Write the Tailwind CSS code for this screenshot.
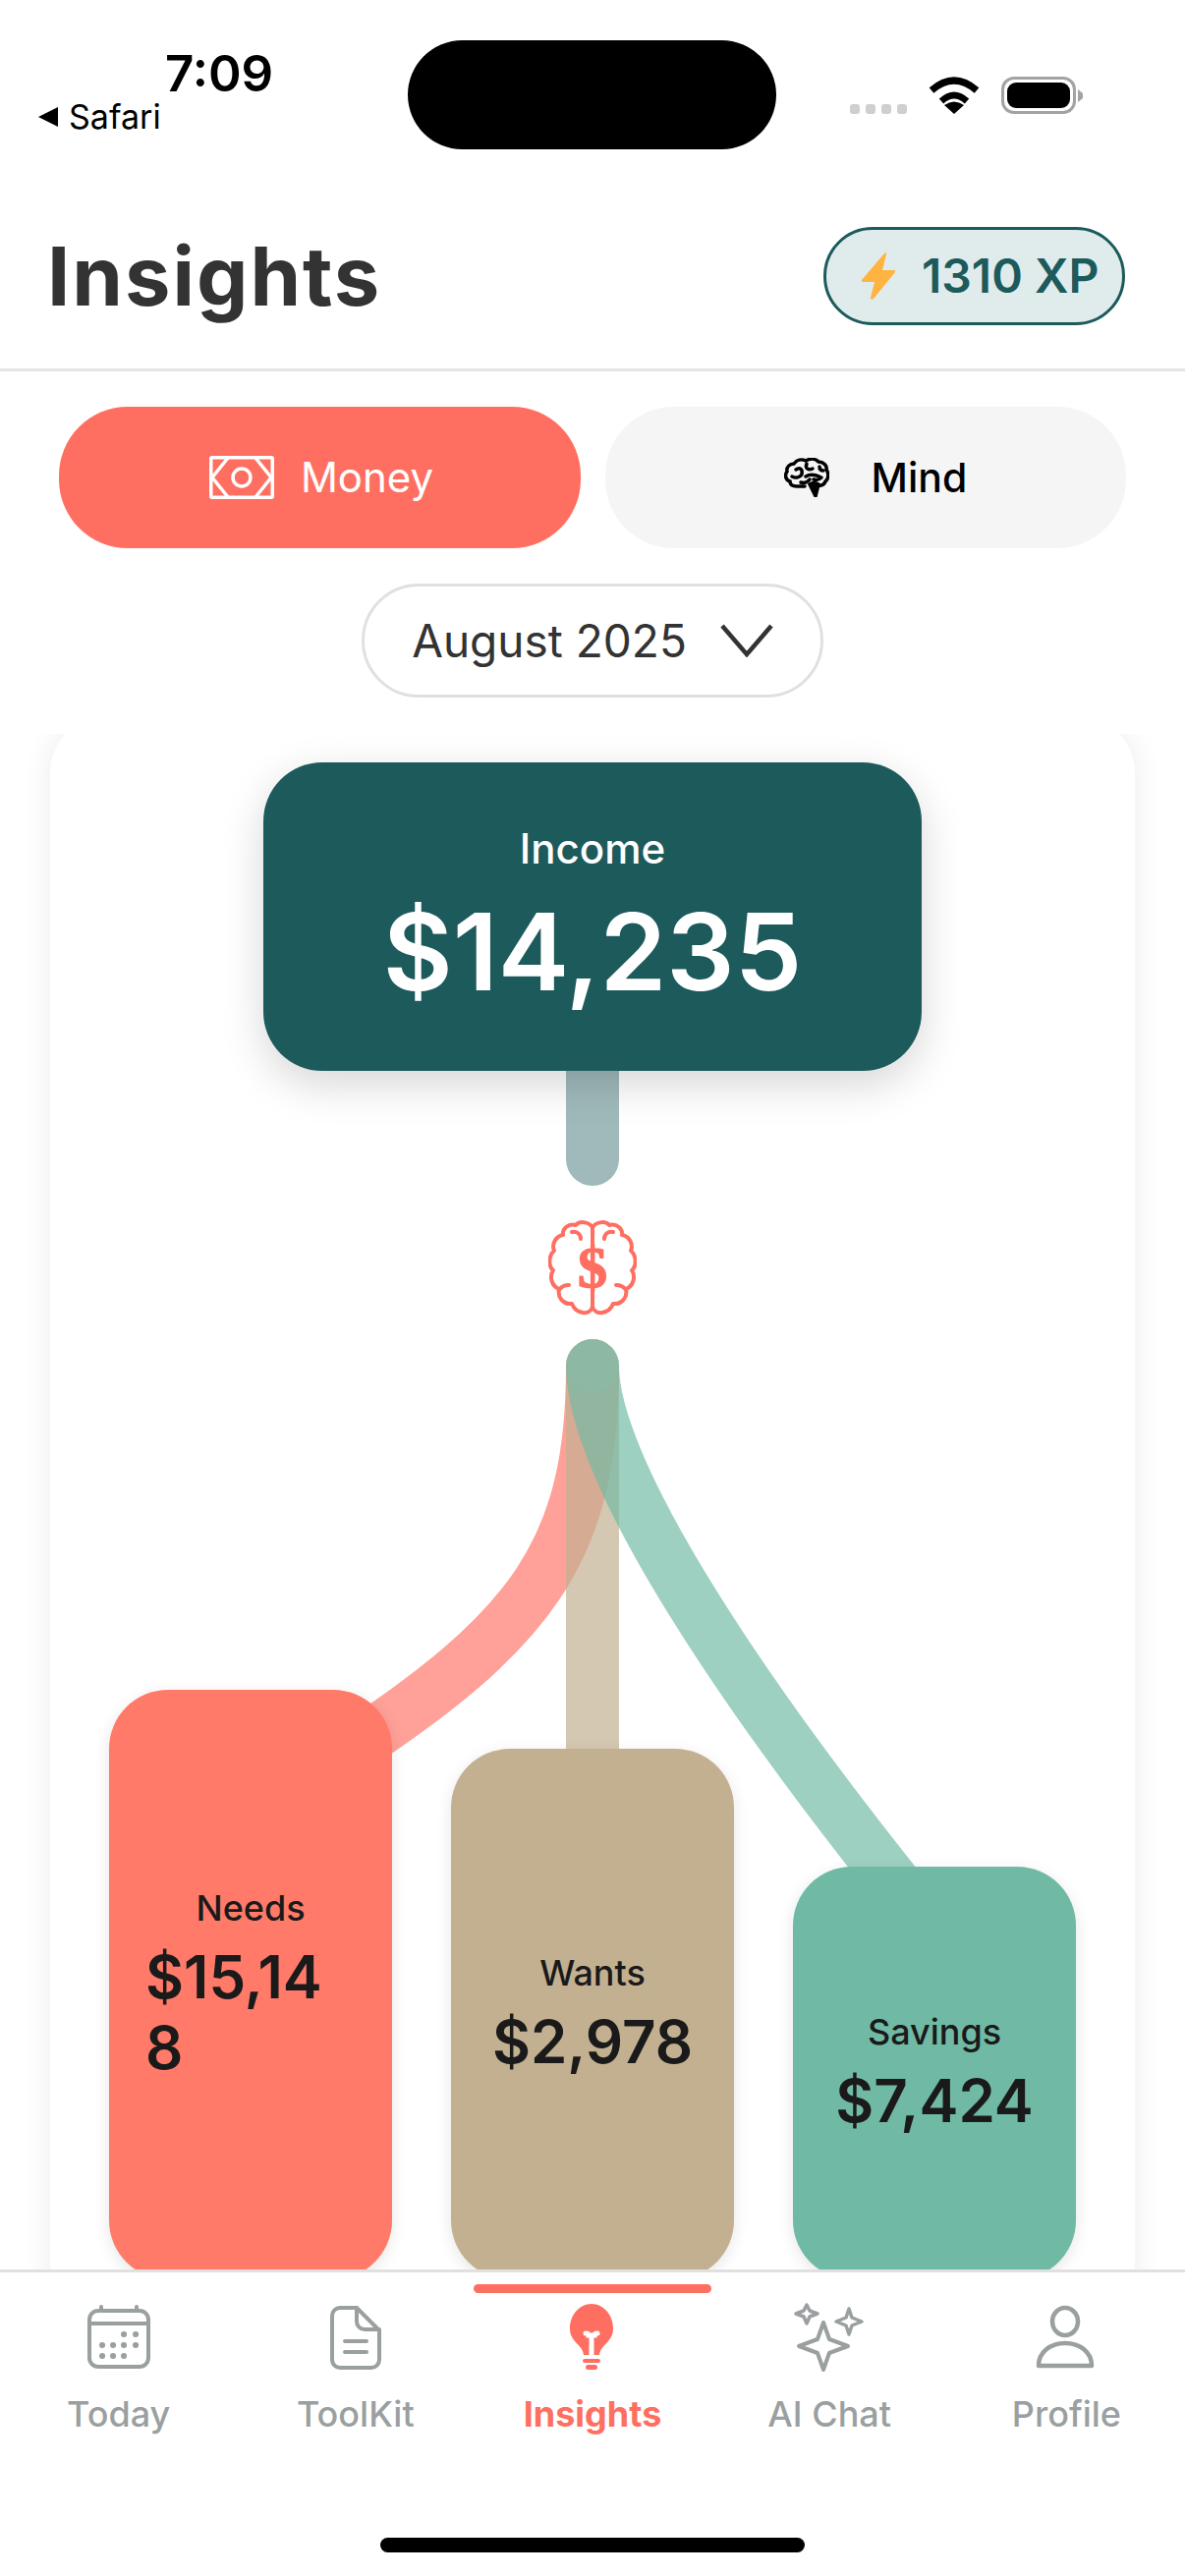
<!doctype html>
<html lang="en">
<head>
  <meta charset="UTF-8">
  <meta name="viewport" content="width=device-width, initial-scale=1.0">
  <script src="https://cdn.jsdelivr.net/npm/@tailwindcss/browser@4"></script>
  <title>Insights</title>
</head>
<body class="bg-white">
<div class="w-[1206px] h-[2622px] flex flex-col overflow-hidden bg-white font-['Inter',sans-serif]">

  <!-- status bar -->
  <div class="h-[230px] shrink-0 relative">
    <span class="absolute left-[168px] top-[45px] text-[51px] leading-[60px] font-semibold text-black">7:09</span>
    <div class="absolute left-[38px] top-[99px] flex items-center gap-[10px]">
      <svg width="22" height="22" viewBox="0 0 22 22"><path d="M21 1v20L1 11z" fill="#000"></path></svg>
      <span class="text-[34px] leading-[40px] text-black">Safari</span>
    </div>
    <div class="absolute left-[415px] top-[41px] w-[375px] h-[111px] bg-black rounded-[56px]"></div>
    <div class="absolute left-[865px] top-[106px] flex gap-[6px]">
      <div class="w-[10px] h-[10px] rounded-[3px] bg-[#cfcfcf]"></div>
      <div class="w-[10px] h-[10px] rounded-[3px] bg-[#cfcfcf]"></div>
      <div class="w-[10px] h-[10px] rounded-[3px] bg-[#cfcfcf]"></div>
      <div class="w-[10px] h-[10px] rounded-[3px] bg-[#cfcfcf]"></div>
    </div>
    <svg class="absolute left-[945px] top-[78px]" width="52" height="38" viewBox="0 0 52 38" fill="none" stroke="#000">
      <path d="M3 14Q26-6 49 14" stroke-width="7"></path>
      <path d="M13 25Q26 13 39 25" stroke-width="6.5"></path>
      <path d="M26 38L16 29Q26 22 36 29z" fill="#000" stroke="none"></path>
    </svg>
    <div class="absolute left-[1019px] top-[78px] flex items-center">
      <div class="w-[76px] h-[38px] rounded-[13px] border-[3px] border-[#a3a3a3] p-[3px]">
        <div class="w-full h-full rounded-[9px] bg-black"></div>
      </div>
      <svg class="ml-[2px]" width="5" height="13" viewBox="0 0 5 13"><path d="M0 0l5 4v5l-5 4z" fill="#a3a3a3"></path></svg>
    </div>
  </div>

  <!-- header -->
  <div class="h-[148px] shrink-0 border-b-[3px] border-[#e5e5e5] flex items-center justify-between pl-[48px] pr-[61px] pb-[44px]">
    <h1 class="text-[83px] leading-[90px] font-bold tracking-[2px] text-[#333333]">Insights</h1>
    <div class="w-[307px] h-[100px] rounded-full border-[3px] border-[#1d5a5c] bg-[#e0ecec] flex items-center pl-[34px] gap-[25px]">
      <svg width="38" height="48" viewBox="0 0 38 48"><path d="M25 1L2 28a1.500 1.500 0 0 0 1 2h12l-4 16c0 2 2 2 3 1l22-27a1.500 1.500 0 0 0-1-2H23l4-16c0-2-1-2-2-1z" fill="#ffb340"></path></svg>
      <span class="text-[48px] leading-[54px] font-semibold text-[#1d5a5c]">1310 XP</span>
    </div>
  </div>

  <!-- money / mind switch -->
  <div class="shrink-0 flex gap-[25px] px-[60px] pt-[36px]">
    <div class="w-[531px] h-[144px] rounded-[70px] bg-[#ff6f61] flex items-center justify-center gap-[27px] pl-[3px] text-white">
      <svg width="66" height="44" viewBox="0 0 66 44" fill="none" stroke="#fff" stroke-width="3.500">
        <rect x="1.750" y="1.750" width="62.500" height="40.500" rx="1"></rect>
        <circle cx="33" cy="22" r="9"></circle>
        <path d="M19 2L3 22l16 20M47 2l16 20-16 20"></path>
      </svg>
      <span class="text-[42px] leading-[50px]">Money</span>
    </div>
    <div class="w-[530px] h-[144px] rounded-[70px] bg-[#f5f5f5] flex items-center justify-center gap-[43px] pl-[20px] text-black">
      <svg width="46" height="40" viewBox="0 0 46 40" fill="none" stroke="#000" stroke-width="3.500" stroke-linecap="round">
        <path d="M21 29H13C8 29 6 27 6 24C2 23 0 18 3 14C2 9 6 6 10 6C13 2 18 1 22 3C27 0 32 1 35 4C40 4 44 8 43 12C46 16 45 22 42 24C41 28 36 29 33 28" fill="#f5f5f5"></path>
        <path d="M26 27l6 12 3-12c-3-2-6-2-9 0z" fill="#000"></path>
        <path d="M12 12c4-3 7 0 6 4M23 6c-2 5 2 7 6 5M8 19c4 2 8 1 10-2M22 19c5-3 9-2 14 0M36 9c0 3 2 4 4 4M17 25c3 1 7 0 9-3M30 22c3 1 6 0 8-2"></path>
      </svg>
      <span class="text-[41px] leading-[50px] font-medium">Mind</span>
    </div>
  </div>

  <!-- month picker -->
  <div class="shrink-0 flex justify-center pt-[36px] pb-[37px]">
    <div class="w-[470px] h-[116px] rounded-full border-[3px] border-[#e0e0e0] flex items-center justify-center gap-[34px] text-[#333333]">
      <span class="text-[46px] leading-[54px]">August 2025</span>
      <svg width="54" height="34" viewBox="0 0 54 34" fill="none" stroke="#333333" stroke-width="4.500"><path d="M2 2l25 29L52 2"></path></svg>
    </div>
  </div>

  <!-- scroll area, clipped under the tab bar -->
  <div class="flex-1 min-h-0 overflow-hidden relative">
    <div class="mx-[51px] mt-[-20px] h-[1640px] bg-white rounded-[60px] shadow-[0_0_30px_rgba(0,0,0,0.08)] relative">
      <svg class="absolute left-[-51px] top-[-727px]" width="1206" height="2622" viewBox="0 0 1206 2622" fill="none" stroke-linecap="round">
        <path d="M603 1070V1180" stroke="#1d5a5c" stroke-opacity="0.42" stroke-width="54"></path>
        <path d="M603 1390C603 1580 540 1660 350 1785" stroke="#ff6f61" stroke-opacity="0.65" stroke-width="54" stroke-linecap="butt"></path>
        <path d="M603 1390V1800" stroke="#c3b091" stroke-opacity="0.7" stroke-width="54"></path>
        <path d="M603 1390C603 1490 735 1700 937 1950" stroke="#70baa5" stroke-opacity="0.68" stroke-width="54" stroke-linecap="butt"></path>
        <path d="M603 1390V1390" stroke="#8db8a3" stroke-width="54"></path>
      </svg>

      <div class="relative pt-[49px] flex flex-col items-center">
        <div class="w-[670px] h-[314px] rounded-[60px] bg-[#1d5a5c] shadow-[0_14px_44px_rgba(0,0,0,0.16)] flex flex-col items-center justify-center gap-[19px] text-white">
          <span class="text-[42px] leading-[50px] font-medium">Income</span>
          <span class="text-[109px] leading-[120px] font-semibold">$14,235</span>
        </div>

        <svg class="mt-[152px]" width="90" height="98" viewBox="0 0 90 98" fill="none" stroke="#ff6f61" stroke-width="4" stroke-linecap="round" stroke-linejoin="round">
          <path d="M45 8C43 2 32 0 28 5C20 3 14 9 15 15C8 16 3 24 6 31C0 36 0 47 5 51C1 57 3 67 11 70C9 78 15 86 24 85C28 95 42 98 45 88C48 98 62 95 66 85C75 86 81 78 79 70C87 67 89 57 85 51C90 47 90 36 84 31C87 24 82 16 75 15C76 9 70 3 62 5C58 0 47 2 45 8V88"></path>
          <path d="M33 19c0-5-4-8-9-7M57 19c0-5 4-8 9-7M21 66c-4 0-8 2-10 5M69 66c4 0 8 2 10 5"></path>
          <text x="45" y="68" font-family="Liberation Serif, serif" font-size="60" font-weight="700" fill="#ff6f61" stroke="#ff6f61" stroke-width="1.500" text-anchor="middle">$</text>
        </svg>

        <div class="absolute left-[60px] top-[993px] flex items-end gap-[60px] h-[600px]">
          <div class="w-[288px] h-[600px] rounded-[60px] bg-[#ff7a68] shadow-[0_4px_16px_rgba(0,0,0,0.10)] flex flex-col items-center justify-center px-[37px] text-[#1a1a1a]">
            <span class="text-[36px] leading-[44px] font-medium mb-[12px]">Needs</span>
            <span class="w-full text-[60px] leading-[72px] font-semibold break-all">$15,148</span>
          </div>
          <div class="w-[288px] h-[540px] rounded-[60px] bg-[#c3b091] shadow-[0_4px_16px_rgba(0,0,0,0.10)] flex flex-col items-center justify-center px-[20px] text-[#1a1a1a]">
            <span class="text-[36px] leading-[44px] font-medium mb-[12px]">Wants</span>
            <span class="text-[60px] leading-[72px] font-semibold">$2,978</span>
          </div>
          <div class="w-[288px] h-[420px] rounded-[60px] bg-[#70baa5] shadow-[0_4px_16px_rgba(0,0,0,0.10)] flex flex-col items-center justify-center px-[20px] text-[#1a1a1a]">
            <span class="text-[36px] leading-[44px] font-medium mb-[12px]">Savings</span>
            <span class="text-[60px] leading-[72px] font-semibold">$7,424</span>
          </div>
        </div>
      </div>
    </div>
  </div>

  <!-- tab bar -->
  <div class="h-[312px] shrink-0 border-t-[3px] border-[#e0e0e0] bg-white relative">
    <div class="grid grid-cols-5 pt-[33px]">
      <div class="flex flex-col items-center gap-[23px] text-[#9a9fa0]">
        <svg width="66" height="66" viewBox="0 0 66 66" fill="none" stroke="#9a9fa0" stroke-width="4" stroke-linecap="round">
          <rect x="3" y="6" width="60" height="57" rx="9"></rect>
          <path d="M3 19h60M15 2v4M51 2v4"></path>
          <path d="M38 30h.1M50 30h.1M16 41h.1M27 41h.1M38 41h.1M50 41h.1M16 52h.1M27 52h.1M38 52h.1" stroke-width="6"></path>
        </svg>
        <span class="text-[36px] leading-[44px] font-medium">Today</span>
      </div>
      <div class="flex flex-col items-center gap-[23px] text-[#9a9fa0]">
        <svg width="66" height="66" viewBox="0 0 66 66" fill="none" stroke="#9a9fa0" stroke-width="4" stroke-linecap="round" stroke-linejoin="round">
          <path d="M34 3H17a8 8 0 0 0-8 8v45a8 8 0 0 0 8 8h32a8 8 0 0 0 8-8V26z"></path>
          <path d="M34 3v14a8 8 0 0 0 8 8h15"></path>
          <path d="M22 37h22M22 48h22"></path>
        </svg>
        <span class="text-[36px] leading-[44px] font-medium">ToolKit</span>
      </div>
      <div class="flex flex-col items-center gap-[23px] text-[#ff6f61] relative">
        <div class="absolute top-[-21px] w-[242px] h-[9px] rounded-full bg-[#ff6f61]"></div>
        <svg class="mt-[-1px]" width="66" height="67" viewBox="0 0 66 67">
          <path d="M32 0C20 0 10 11 10 25c0 6 2 9 5 13 4 5 8 7 9 14h16c1-7 5-9 9-14 3-4 5-7 5-13C54 11 44 0 32 0z" fill="#ff6f61"></path>
          <path d="M26 30c2 0 3 1 3 2h6c0-1 1-2 3-2M32 32v20" fill="none" stroke="#fff" stroke-width="5" stroke-linecap="round"></path>
          <rect x="23" y="56" width="18" height="4" rx="2" fill="#ff6f61"></rect>
          <rect x="26" y="62" width="12" height="5" rx="2.500" fill="#ff6f61"></rect>
        </svg>
        <span class="text-[36px] leading-[44px] font-bold">Insights</span>
      </div>
      <div class="flex flex-col items-center gap-[23px] text-[#9a9fa0]">
        <svg class="mt-[-3px]" width="72" height="72" viewBox="0 0 72 72" fill="none" stroke="#9a9fa0" stroke-width="4" stroke-linejoin="round">
          <path d="M30 21L36 38 55 45 36 52 30 69 24 52 5 45 24 38z"></path>
          <path d="M13 3L16 9 24 12 16 15 13 22 10 15 2 12 10 9z" stroke-width="3.500"></path>
          <path d="M56 7L59 16 69 20 59 24 56 33 53 24 43 20 53 16z" stroke-width="3.500"></path>
        </svg>
        <span class="text-[36px] leading-[44px] font-medium mt-[-3px]">AI Chat</span>
      </div>
      <div class="flex flex-col items-center gap-[23px] text-[#9a9fa0]">
        <svg width="66" height="66" viewBox="0 0 66 66" fill="none" stroke="#9a9fa0" stroke-width="4.500" stroke-linejoin="round">
          <ellipse cx="32" cy="17" rx="13" ry="14"></ellipse>
          <path d="M5 62c0-14 12-23 27-23s27 9 27 23z"></path>
        </svg>
        <span class="text-[36px] leading-[44px] font-medium">Profile</span>
      </div>
    </div>
    <div class="absolute left-[387px] top-[270px] w-[432px] h-[15px] rounded-full bg-black"></div>
  </div>
</div>
</body>
</html>
